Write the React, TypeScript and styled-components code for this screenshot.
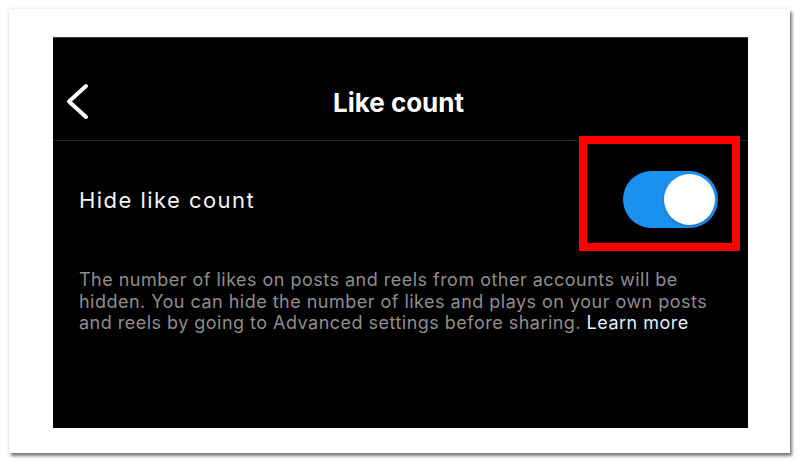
import React, { useState } from "react";
import styled, { createGlobalStyle } from "styled-components";

const Global = createGlobalStyle`
  html, body {
    margin: 0;
    padding: 0;
    background: #ffffff;
  }
  body {
    width: 800px;
    height: 463px;
    overflow: hidden;
    font-family: Inter, "Noto Sans", "Liberation Sans", sans-serif;
  }
`;

const Page = styled.div`
  width: 800px;
  height: 463px;
  padding: 9px 10px 10px 9px;
  box-sizing: border-box;
`;

const Card = styled.div`
  width: 781px;
  height: 444px;
  background: #fff;
  box-shadow: 2px 3px 3px rgba(0, 0, 0, 0.5), 0 0 5px rgba(0, 0, 0, 0.12);
  padding: 28px 42px 25px 44px;
  box-sizing: border-box;
`;

const Screen = styled.div`
  height: 100%;
  background: #000;
  display: flex;
  flex-direction: column;
  border-top: 1px solid #3a3a3a;
  box-sizing: border-box;
`;

const Header = styled.header`
  height: 103px;
  display: grid;
  grid-template-columns: 1fr auto 1fr;
  align-items: center;
  padding: 26px 13px 0 13px;
  box-sizing: border-box;
  border-bottom: 1px solid #262626;
`;

const BackButton = styled.button`
  justify-self: start;
  background: none;
  border: 0;
  padding: 0;
  display: flex;
  cursor: pointer;
`;

const Title = styled.h1`
  margin: 0;
  color: #fff;
  font-size: 26px;
  font-weight: 700;
  transform: translateX(-2px);
`;

const Row = styled.div`
  height: 117px;
  display: flex;
  align-items: center;
  justify-content: space-between;
  padding: 0 30px 0 26px;
`;

const Label = styled.span`
  color: #f5f5f5;
  font-size: 22px;
  font-weight: 400;
  letter-spacing: 1.45px;
`;

const ToggleWrap = styled.div`
  position: relative;
  display: flex;
`;

const Track = styled.button<{ $on: boolean }>`
  width: 95px;
  height: 57px;
  border: 0;
  padding: 3px;
  border-radius: 29px;
  background: ${(p) => (p.$on ? "#1b91ef" : "#3a3a3a")};
  display: flex;
  justify-content: ${(p) => (p.$on ? "flex-end" : "flex-start")};
  cursor: pointer;
  box-sizing: border-box;
`;

const Knob = styled.span`
  width: 51px;
  height: 51px;
  border-radius: 50%;
  background: #fff;
  box-shadow: 0 1px 3px rgba(0, 0, 0, 0.25);
`;

const Highlight = styled.div`
  position: absolute;
  left: -44px;
  right: -22px;
  top: -35px;
  bottom: -23px;
  border: 8px solid #ff0000;
  box-shadow: 0 0 4px rgba(0, 0, 0, 0.6), inset 0 0 4px rgba(0, 0, 0, 0.6);
  pointer-events: none;
`;

const Note = styled.p`
  margin: 11px 0 0;
  padding: 0 0 0 26px;
  max-width: 645px;
  color: #8e8e8e;
  font-size: 18px;
  letter-spacing: 0.48px;
  line-height: 21.5px;
`;

const Link = styled.a`
  color: #e0f1ff;
  text-decoration: none;
`;

function Chevron() {
  return (
    <svg width="24" height="38" viewBox="0 0 24 38">
      <polyline
        points="20,3 3,18.5 20,34"
        fill="none"
        stroke="#fff"
        strokeWidth="4"
        strokeLinecap="round"
        strokeLinejoin="round"
      />
    </svg>
  );
}

export default function App() {
  const [hidden, setHidden] = useState(true);

  return (
    <>
      <Global />
      <Page>
        <Card>
          <Screen>
            <Header>
              <BackButton aria-label="Back">
                <Chevron />
              </BackButton>
              <Title>Like count</Title>
              <span />
            </Header>
            <Row>
              <Label>Hide like count</Label>
              <ToggleWrap>
                <Track $on={hidden} onClick={() => setHidden(!hidden)}>
                  <Knob />
                </Track>
                <Highlight />
              </ToggleWrap>
            </Row>
            <Note>
              The number of likes on posts and reels from other accounts will be
              hidden. You can hide the number of likes and plays on your own
              posts and reels by going to Advanced settings before sharing.{" "}
              <Link href="#">Learn more</Link>
            </Note>
          </Screen>
        </Card>
      </Page>
    </>
  );
}
